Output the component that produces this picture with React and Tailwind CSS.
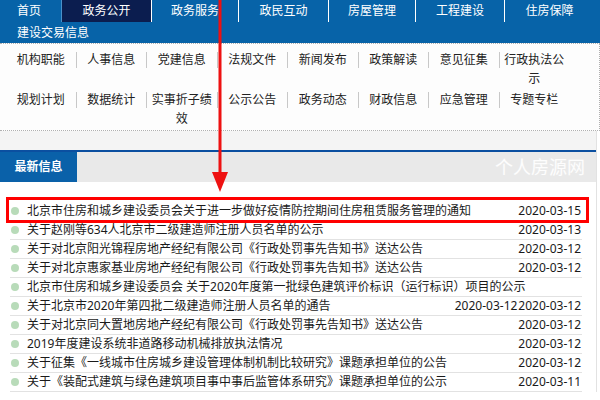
import React from 'react'

const NAV = [
  { label: '政务服务', w: 'w-[87px]' },
  { label: '政民互动', w: 'w-[90px]' },
  { label: '房屋管理', w: 'w-[87px]' },
  { label: '工程建设', w: 'w-[89px]' },
  { label: '住房保障', w: 'w-[90px]' },
]

const SUB_ROWS = [
  ['机构职能', '人事信息', '党建信息', '法规文件', '新闻发布', '政策解读', '意见征集', '行政执法公示'],
  ['规划计划', '数据统计', '实事折子绩效', '公示公告', '政务动态', '财政信息', '应急管理', '专题专栏'],
]

// news list, dates may be several (one row in the source shows two)
const NEWS = [
  { title: '北京市住房和城乡建设委员会关于进一步做好疫情防控期间住房租赁服务管理的通知', dates: ['2020-03-15'] },
  { title: '关于赵刚等634人北京市二级建造师注册人员名单的公示', dates: ['2020-03-13'] },
  { title: '关于对北京阳光锦程房地产经纪有限公司《行政处罚事先告知书》送达公告', dates: ['2020-03-12'] },
  { title: '关于对北京惠家基业房地产经纪有限公司《行政处罚事先告知书》送达公告', dates: ['2020-03-12'] },
  { title: '北京市住房和城乡建设委员会 关于2020年度第一批绿色建筑评价标识（运行标识）项目的公示', dates: [] },
  { title: '关于北京市2020年第四批二级建造师注册人员名单的通告', dates: ['2020-03-12', '2020-03-12'] },
  { title: '关于对北京同大置地房地产经纪有限公司《行政处罚事先告知书》送达公告', dates: ['2020-03-12'] },
  { title: '2019年度建设系统非道路移动机械排放执法情况', dates: ['2020-03-12'] },
  { title: '关于征集《一线城市住房城乡建设管理体制机制比较研究》课题承担单位的公告', dates: ['2020-03-12'] },
  { title: '关于《装配式建筑与绿色建筑项目事中事后监管体系研究》课题承担单位的公示', dates: ['2020-03-11'] },
]

export default function App() {
  return (
    <div
      className="relative w-[600px] h-[400px] overflow-hidden bg-white text-[12px]"
      style={{ fontFamily: '"Noto Sans", "Noto Sans CJK SC", sans-serif' }}
    >
      {/* Top nav */}
      <div className="h-[43px] bg-[#0763a8] text-white">
        <div className="flex h-[22px]">
          <div className="w-[61px] pr-[3px] flex items-center justify-center">首页</div>
          <div className="w-[90px] flex items-center justify-center bg-[#0b1d4f] border-l border-[#4a90c8]">
            政务公开
          </div>
          {NAV.map((n) => (
            <div key={n.label} className={`${n.w} flex items-center justify-center border-l border-white`}>
              {n.label}
            </div>
          ))}
        </div>
        <div className="h-[21px] leading-[21px] pl-[17px]">建设交易信息</div>
      </div>

      {/* Sub menu */}
      <div className="h-[88px] pt-[6px] pl-[5px] bg-[#fdfdfd] border-t border-b border-r border-dotted border-[#b0b0b0] text-[#222]">
        {SUB_ROWS.map((row, ri) => (
          <div key={ri} className="flex h-[40px]">
            {row.map((item, i) => (
              <div key={item} className="w-[70.5px] flex items-start">
                {i > 0 ? <span className="w-px h-[16px] mt-[2px] bg-[#c8c8c8]" /> : <span className="w-px" />}
                <div className="flex-1 text-center leading-[19px]">{item}</div>
              </div>
            ))}
          </div>
        ))}
      </div>

      {/* Latest info panel */}
      <div className="w-[597px] border-r border-[#e2e2e2]">
        <div className="h-[19px] bg-[#f4f4f4]" />
        <div className="h-[2px] bg-[#0b4fa0]" />
        <div className="flex h-[30px]">
          <div className="w-[77px] bg-[#0a61a9] text-white font-bold flex items-center justify-center">
            最新信息
          </div>
          <div className="flex-1 bg-[#e9e9e9] flex items-center justify-end pr-[11px]">
            <span className="text-[18px] text-white/90 leading-none">个人房源网</span>
          </div>
        </div>

        <div className="pt-[20px] pl-[10px] pr-[14px] text-[#1a1a1a]">
          {NEWS.map((n, i) => (
            <div key={i} className="flex items-center h-[19px] border-b border-[#e2e2e2] whitespace-nowrap">
              <span className="w-[8px] h-[8px] ml-[1px] rounded-full bg-[#b8dbb9] shrink-0" />
              <span className="ml-[8px] leading-[18px]">{n.title}</span>
              <span className="flex-1" />
              {n.dates.map((d, j) => (
                <span key={j} className="leading-[18px] pr-[1px]">{d}</span>
              ))}
            </div>
          ))}
        </div>
      </div>

      {/* Red highlight box around first item */}
      <div className="absolute left-[6px] top-[197px] w-[583px] h-[26px] border-[3px] border-[#f00]" />

      {/* Red arrow */}
      <svg className="absolute left-[208px] top-0" width="24" height="193" viewBox="0 0 24 193">
        <rect x="10.5" y="0" width="3" height="174" fill="#ee1111" />
        <polygon points="4,172 20,172 12,192" fill="#ee1111" />
      </svg>
    </div>
  )
}
